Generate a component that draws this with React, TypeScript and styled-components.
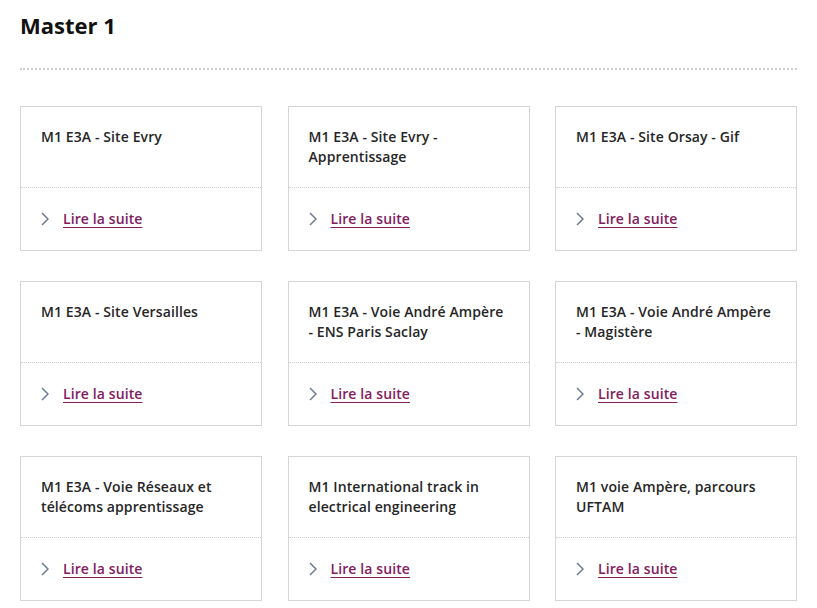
import styled, { createGlobalStyle } from 'styled-components';

const GlobalStyle = createGlobalStyle`
  html, body {
    margin: 0;
    padding: 0;
    background: #fff;
  }
  body {
    font-family: "Open Sans", "Liberation Sans", sans-serif;
    color: #111;
  }
`;

const Page = styled.div`
  padding: 8px 20px 20px;
`;

const Title = styled.h2`
  margin: 0;
  font-size: 22px;
  line-height: 34px;
  font-weight: 700;
  color: #111;
  padding-bottom: 26px;
  border-bottom: 2px dotted #d0d0d0;
`;

const Grid = styled.div`
  display: grid;
  grid-template-columns: repeat(3, 1fr);
  column-gap: 25.5px;
  row-gap: 30px;
  margin-top: 36px;
`;

const Card = styled.div`
  border: 1px solid #d6d6d6;
  display: flex;
  flex-direction: column;
`;

const CardTitle = styled.div`
  padding: 20px 20px;
  min-height: 40px;
  font-size: 14px;
  line-height: 20px;
  font-weight: 600;
  letter-spacing: 0.1px;
  color: #262626;
  border-bottom: 1px dotted #cfcfcf;
`;

const CardFooter = styled.div`
  display: flex;
  align-items: center;
  gap: 14px;
  padding: 21px 20px 21px;
  height: 20px;
`;

const ReadMore = styled.a`
  font-size: 14px;
  line-height: 20px;
  font-weight: 600;
  letter-spacing: 0.1px;
  color: #82205e;
  text-decoration: underline;
  text-underline-offset: 3px;
  text-decoration-thickness: 1px;
  cursor: pointer;
`;

const Chevron = () => (
  <svg width="8" height="14" viewBox="0 0 8 14" fill="none">
    <path d="M1 1l6 6-6 6" stroke="#6e7a96" strokeWidth="1.5" />
  </svg>
);

const items = [
  'M1 E3A - Site Evry',
  'M1 E3A - Site Evry - Apprentissage',
  'M1 E3A - Site Orsay - Gif',
  'M1 E3A - Site Versailles',
  'M1 E3A - Voie André Ampère - ENS Paris Saclay',
  'M1 E3A - Voie André Ampère - Magistère',
  'M1 E3A - Voie Réseaux et télécoms apprentissage',
  'M1 International track in electrical engineering',
  'M1 voie Ampère, parcours UFTAM',
];

export default function App() {
  return (
    <>
      <GlobalStyle />
      <Page>
        <Title>Master 1</Title>
        <Grid>
          {items.map((label) => (
            <Card key={label}>
              <CardTitle>{label}</CardTitle>
              <CardFooter>
                <Chevron />
                <ReadMore>Lire la suite</ReadMore>
              </CardFooter>
            </Card>
          ))}
        </Grid>
      </Page>
    </>
  );
}
